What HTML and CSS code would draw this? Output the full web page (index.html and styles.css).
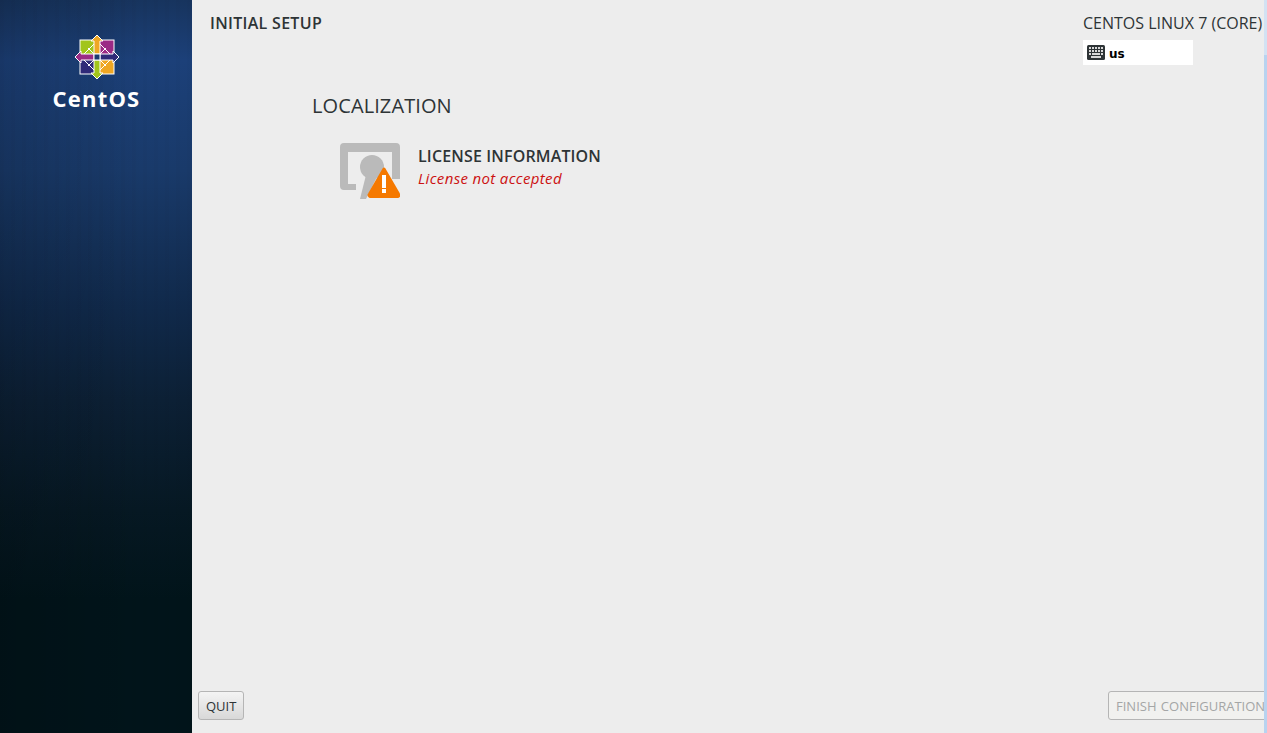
FILE: index.html
```html
<!DOCTYPE html>
<html lang="en">
<head>
    <meta charset="UTF-8">
    <title>Initial Setup</title>
    <link rel="stylesheet" href="styles.css">
</head>
<body>
    <div class="window">
        <aside class="sidebar">
            <svg class="logo-mark" width="46" height="46" viewBox="0 0 46 46">
                <rect x="5.500" y="5.500" width="35" height="35" fill="#fff"/>
                <rect x="6.500" y="6.500" width="15.500" height="15.500" fill="#a2c51c"/>
                <rect x="24" y="6.500" width="15.500" height="15.500" fill="#9b2a85"/>
                <rect x="6.500" y="24" width="15.500" height="15.500" fill="#2f2a78"/>
                <rect x="24" y="24" width="15.500" height="15.500" fill="#efa724"/>
                <path d="M23 7 L7 23 L23 39 L39 23 Z" fill="none" stroke="#fff" stroke-width="1"/>
                <path d="M14 14 L20 20 M32 14 L26 20 M14 32 L20 26 M32 32 L26 26" stroke="#fff" stroke-width="1"/>
                <path d="M23 1 L29 7 L26 7 L26 20 L20 20 L20 7 L17 7 Z" fill="#efa724" stroke="#fff" stroke-width="1"/>
                <path d="M45 23 L39 29 L39 26 L26 26 L26 20 L39 20 L39 17 Z" fill="#2f2a78" stroke="#fff" stroke-width="1"/>
                <path d="M23 45 L17 39 L20 39 L20 26 L26 26 L26 39 L29 39 Z" fill="#a2c51c" stroke="#fff" stroke-width="1"/>
                <path d="M1 23 L7 17 L7 20 L20 20 L20 26 L7 26 L7 29 Z" fill="#9b2a85" stroke="#fff" stroke-width="1"/>
                <rect x="20" y="20" width="6" height="6" fill="#1d3a6e" stroke="#fff"/>
            </svg>
            <div class="logo-name">CentOS</div>
        </aside>
        <main class="content">
            <header class="topbar">
                <h1 class="setup-title">INITIAL SETUP</h1>
                <div class="product">
                    <div class="product-name">CENTOS LINUX 7 (CORE)</div>
                    <div class="layout-box">
                        <svg width="18" height="15" viewBox="0 0 18 15">
                            <rect width="18" height="15" rx="1.500" fill="#2e3436"/>
                            <path d="M2 2h2v2H2zM5 2h2v2H5zM8 2h2v2H8zM11 2h2v2h-2zM14 2h2v2h-2zM2 5h2v2H2zM5 5h2v2H5zM8 5h2v2H8zM11 5h2v2h-2zM14 5h2v2h-2zM2 8h2v2H2zM14 8h2v2h-2zM5 8h8v2H5zM4 11h10v2H4z" fill="#d8d8d8"/>
                        </svg>
                        <span class="layout-name">us</span>
                    </div>
                </div>
            </header>
            <section class="spokes">
                <h2 class="category">LOCALIZATION</h2>
                <div class="spoke">
                    <svg class="spoke-icon" width="60" height="56" viewBox="0 0 60 56">
                        <path d="M4 0H56a4 4 0 0 1 4 4V36H52V9H8V41H16V47H4a4 4 0 0 1-4-4V4a4 4 0 0 1 4-4Z" fill="#bababa"/>
                        <circle cx="32" cy="24" r="12" fill="#bababa"/>
                        <path d="M26 32H38L26 56H20Z" fill="#bababa"/>
                        <path d="M44 26 L58.500 51 a1.500 1.500 0 0 1 -1.500 2.500 H31 a1.500 1.500 0 0 1 -1.500 -2.500 Z" fill="#f57900" stroke="#f57900" stroke-width="3" stroke-linejoin="round"/>
                        <rect x="42" y="32" width="4" height="13" fill="#fff"/>
                        <rect x="42" y="46" width="4" height="4" fill="#fff"/>
                    </svg>
                    <div class="spoke-text">
                        <div class="spoke-title">LICENSE INFORMATION</div>
                        <div class="spoke-status">License not accepted</div>
                    </div>
                </div>
            </section>
            <footer class="actions">
                <button class="btn">QUIT</button>
                <button class="btn btn-disabled">FINISH CONFIGURATION</button>
            </footer>
        </main>
        <div class="edge"></div>
    </div>
</body>
</html>
```
FILE: styles.css
```css
html, body {
    height: 100%;
}

body {
    margin: 0;
    overflow: hidden;
    font-family: "Open Sans", sans-serif;
    color: #2e3436;
    background: #ededed;
}

.window {
    display: flex;
    height: 733px;
}

/* window edge of the desktop behind, paler along the top */
.edge {
    width: 3px;
    flex: none;
    background: linear-gradient(to bottom, #d3e2f3 0, #d3e2f3 55px, #b8d3f0 55px);
}

.sidebar {
    width: 192px;
    flex: none;
    display: flex;
    flex-direction: column;
    align-items: center;
    padding: 34px 0 0 1px;
    box-sizing: border-box;
    background:
        repeating-linear-gradient(to right, rgba(0, 0, 0, 0.02) 0, rgba(0, 0, 0, 0.02) 4px, transparent 4px, transparent 11px),
        linear-gradient(to right, rgba(0, 0, 0, 0.14), transparent 75%),
        linear-gradient(to bottom, #17345e 0, #1c4079 60px, #193a6a 170px, #10294a 310px, #0c2035 400px, #061823 510px, #01141a 600px, #01141a 100%);
}

.logo-mark {
    display: block;
}

.logo-name {
    margin-top: 4px;
    font-size: 22px;
    line-height: 28px;
    font-weight: 700;
    letter-spacing: 1.200px;
    color: #fff;
}

.content {
    flex: 1;
    display: flex;
    flex-direction: column;
    min-width: 0;
    overflow: hidden;
}

.topbar {
    display: flex;
    justify-content: space-between;
    padding: 13px 3px 0 18px;
}

.setup-title {
    margin: 0;
    font-size: 16px;
    line-height: 20px;
    font-weight: 600;
    letter-spacing: 0.300px;
}

.product {
    width: 178px;
}

.product-name {
    font-size: 16px;
    line-height: 20px;
    white-space: nowrap;
}

.layout-box {
    display: flex;
    align-items: center;
    gap: 4px;
    width: 106px;
    height: 25px;
    margin-top: 7px;
    padding-left: 4px;
    background: #fff;
}

.layout-name {
    padding-top: 3px;
    font-family: "DejaVu Sans", sans-serif;
    font-size: 12px;
    font-weight: bold;
    color: #000;
}

.spokes {
    flex: 1;
    padding: 28px 0 0 120px;
}

.category {
    margin: 0;
    font-size: 20px;
    line-height: 26px;
    font-weight: 400;
    letter-spacing: 0.100px;
}

.spoke {
    display: flex;
    gap: 18px;
    margin: 24px 0 0 28px;
}

.spoke-icon {
    display: block;
}

.spoke-title {
    font-size: 16px;
    line-height: 20px;
    margin-top: 3px;
    font-weight: 600;
    letter-spacing: 0.150px;
}

.spoke-status {
    font-size: 15px;
    line-height: 20px;
    margin-top: 2px;
    font-style: italic;
    letter-spacing: 0.350px;
    color: #cc1111;
}

.actions {
    display: flex;
    justify-content: space-between;
    padding: 0 0 13px 6px;
}

.btn {
    height: 29px;
    padding: 0 7px;
    font-family: "Open Sans", sans-serif;
    font-size: 13px;
    color: #2e3436;
    border: 1px solid #b5b5b5;
    border-radius: 3px;
    background: linear-gradient(to bottom, #f4f4f4, #d8d8d8);
}

/* runs off the window on the right, clipped by .content */
.btn-disabled {
    width: 166px;
    flex: none;
    margin-right: -10px;
    white-space: nowrap;
    text-align: left;
    word-spacing: 1px;
    color: #a4a6a6;
    background: #f1f1ef;
}
```
